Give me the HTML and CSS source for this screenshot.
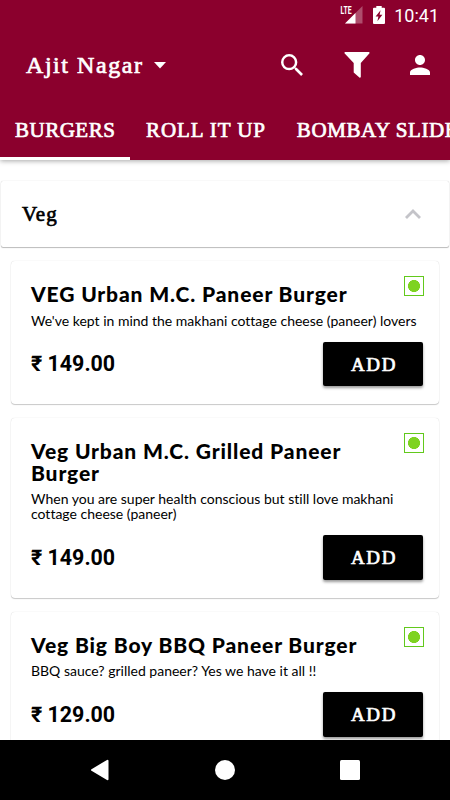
FILE: index.html
```html
<!DOCTYPE html>
<html lang="en">
<head>
    <meta charset="UTF-8">
    <meta name="viewport" content="width=device-width, initial-scale=1.0">
    <title>Menu - Ajit Nagar</title>
    <link rel="stylesheet" href="styles.css">
</head>
<body>
    <header class="header">
        <div class="status-bar">
            <svg class="signal" width="24" height="20" viewBox="0 0 24 20">
                <path d="M22.5 1v17.5H5z" fill="#fff" opacity=".3"/>
                <path d="M15.500 8v10.500H5z" fill="#fff"/>
                <text x="0.500" y="8.500" class="lte" textLength="11" lengthAdjust="spacingAndGlyphs">LTE</text>
            </svg>
            <svg class="battery" width="12" height="18" viewBox="0 0 12 18">
                <path d="M3.300 0h5.400v1.800H11q1 0 1 1V17q0 1-1 1H1q-1 0-1-1V2.800q0-1 1-1h2.300z" fill="#fff"/>
                <path d="M7.600 4.200L2.600 10.500h2.800L4.400 15.200 9.400 8.800H6.600z" fill="#8b002d"/>
            </svg>
            <span class="clock">10:41</span>
        </div>

        <div class="toolbar">
            <div class="location">
                <span class="location-name">Ajit Nagar</span>
                <svg width="12" height="7" viewBox="0 0 12 7"><path d="M0 0h12L6 6.500z" fill="#fff"/></svg>
            </div>
            <div class="actions">
                <svg width="22" height="22" viewBox="3 3 17.500 17.500">
                    <path fill="#fff" d="M15.500 14h-.790l-.280-.270A6.470 6.470 0 0 0 16 9.500 6.500 6.500 0 1 0 9.500 16c1.610 0 3.090-.590 4.230-1.570l.270.280v.790l5 4.990L20.490 19l-4.990-5zm-6 0C7.010 14 5 11.990 5 9.500S7.010 5 9.500 5 14 7.010 14 9.500 11.990 14 9.500 14z"/>
                </svg>
                <svg class="filter" width="26" height="26" viewBox="0 0 26 26">
                    <path fill="#fff" d="M1.200 0h23.600q1.200.300.500 1.600L16.800 11v14q-.500 1.200-1.400.600L9.700 20.500V11L.700 1.600Q0 .300 1.200 0z"/>
                </svg>
                <svg width="20" height="20" viewBox="4 4 16 16">
                    <path fill="#fff" d="M12 12c2.210 0 4-1.790 4-4s-1.790-4-4-4-4 1.790-4 4 1.790 4 4 4zm0 2c-2.670 0-8 1.340-8 4v2h16v-2c0-2.660-5.330-4-8-4z"/>
                </svg>
            </div>
        </div>

        <nav class="tabs">
            <div class="tab active"><span class="tab-burgers">BURGERS</span></div>
            <div class="tab"><span class="tab-roll">ROLL IT UP</span></div>
            <div class="tab"><span class="tab-slider">BOMBAY SLIDERS</span></div>
        </nav>
    </header>

    <main class="content">
        <div class="section-header">
            <span class="section-title">Veg</span>
            <svg width="16" height="10" viewBox="0 0 16 10"><path d="M1 9l7-7 7 7" fill="none" stroke="#c4c4c9" stroke-width="2.800"/></svg>
        </div>

        <div class="card">
            <div class="veg-mark"></div>
            <h2>VEG Urban M.C. Paneer Burger</h2>
            <p>We've kept in mind the makhani cottage cheese (paneer) lovers</p>
            <div class="card-footer">
                <span class="price">₹ 149.00</span>
                <button type="button">ADD</button>
            </div>
        </div>

        <div class="card">
            <div class="veg-mark"></div>
            <h2>Veg Urban M.C. Grilled Paneer<br>Burger</h2>
            <p>When you are super health conscious but still love makhani<br>cottage cheese (paneer)</p>
            <div class="card-footer">
                <span class="price">₹ 149.00</span>
                <button type="button">ADD</button>
            </div>
        </div>

        <div class="card">
            <div class="veg-mark"></div>
            <h2>Veg Big Boy BBQ Paneer Burger</h2>
            <p>BBQ sauce? grilled paneer? Yes we have it all !!</p>
            <div class="card-footer">
                <span class="price">₹ 129.00</span>
                <button type="button">ADD</button>
            </div>
        </div>
    </main>

    <!-- Android navigation bar -->
    <footer class="nav-bar">
        <svg width="20" height="22" viewBox="0 0 20 22"><path d="M17.500 1.800v18.400L2 11z" fill="#fff" stroke="#fff" stroke-width="2" stroke-linejoin="round"/></svg>
        <svg width="20" height="20" viewBox="0 0 20 20"><circle cx="10" cy="10" r="10" fill="#fff"/></svg>
        <svg width="20" height="20" viewBox="0 0 20 20"><rect width="20" height="20" rx="1.500" fill="#fff"/></svg>
    </footer>
</body>
</html>
```
FILE: styles.css
```css
* {
    box-sizing: border-box;
}

body {
    margin: 0;
    height: 800px;
    display: flex;
    flex-direction: column;
    overflow: hidden;
    background-color: #fff;
    color: #000;
    font-family: Lato, sans-serif;
}

.header {
    height: 160px;
    flex-shrink: 0;
    background-color: #8b002d;
    color: #fff;
    box-shadow: 0 1px 5px rgba(0, 0, 0, 0.35);
}

.status-bar {
    height: 30px;
    display: flex;
    align-items: center;
    justify-content: flex-end;
    padding-right: 11px;
}

.signal {
    margin-right: 9px;
}

.lte {
    font: bold 11px Roboto, sans-serif;
    fill: #fff;
}

.clock {
    font: 400 18px/30px Roboto, sans-serif;
    margin-left: 9px;
    padding-top: 1px;
}

.toolbar {
    height: 70px;
    display: flex;
    align-items: center;
    justify-content: space-between;
    padding: 0 20px 0 26px;
}

.location {
    display: flex;
    align-items: center;
    gap: 11px;
}

.location-name,
.tab,
.section-title,
button {
    font-family: "Liberation Serif", serif;
    -webkit-text-stroke: 0.7px currentColor;
}

.location-name {
    font-size: 24px;
    letter-spacing: 1.55px;
}

.actions {
    display: flex;
    align-items: center;
}

.filter {
    margin: 0 40px 0 41px;
}

.tabs {
    height: 60px;
    display: flex;
    overflow: hidden;
}

.tab {
    flex-shrink: 0;
    padding: 0 15px 0 16px;
    font-size: 21px;
    line-height: 61px;
    white-space: nowrap;
}

.tab.active {
    width: 130px;
    padding-left: 15px;
    border-bottom: 3px solid #fff;
}

.tab-burgers {
    letter-spacing: 0.5px;
}

.tab-roll {
    letter-spacing: 0.9px;
}

.tab-slider {
    letter-spacing: 0.6px;
}

.content {
    flex: 1;
    overflow: hidden;
    padding: 21px 1px 0;
}

.section-header {
    height: 66px;
    display: flex;
    align-items: center;
    justify-content: space-between;
    padding: 0 28px 0 21px;
    border-radius: 2px;
    box-shadow: 0 1px 1px rgba(0, 0, 0, 0.25), 0 0 1px rgba(0, 0, 0, 0.25);
}

.section-title {
    font-size: 21px;
    letter-spacing: 1px;
    padding-top: 1px;
}

.card {
    position: relative;
    margin: 14px 10px 0;
    padding: 22px 16px 18px 20px;
    border-radius: 4px;
    box-shadow: 0 1px 1px rgba(0, 0, 0, 0.2), 0 0 1px rgba(0, 0, 0, 0.2);
}

.veg-mark {
    position: absolute;
    top: 15px;
    right: 15px;
    width: 20px;
    height: 20px;
    border: 1px solid #62c91c;
    background: radial-gradient(circle, #7ed321 5.7px, transparent 6.3px);
}

.card h2 {
    margin: 0;
    font-size: 21px;
    font-weight: 900;
    line-height: 21.5px;
    letter-spacing: 0.87px;
    white-space: nowrap;
}

.card p {
    margin: 8px 0 14px;
    font-size: 14px;
    line-height: 15px;
    font-variant-ligatures: none;
    white-space: nowrap;
}

.card-footer {
    display: flex;
    align-items: center;
    justify-content: space-between;
}

.price {
    font: bold 21.4px Roboto, sans-serif;
}

button {
    width: 100px;
    height: 44.5px;
    padding: 2px 0 0 2px;
    border: none;
    border-radius: 2px;
    background-color: #000;
    color: #fff;
    font-size: 19px;
    letter-spacing: 1.6px;
    box-shadow: 0 2px 3px rgba(0, 0, 0, 0.4);
}

.nav-bar {
    height: 60px;
    flex-shrink: 0;
    display: flex;
    align-items: center;
    justify-content: space-between;
    padding: 0 90px;
    background-color: #000;
}
```
